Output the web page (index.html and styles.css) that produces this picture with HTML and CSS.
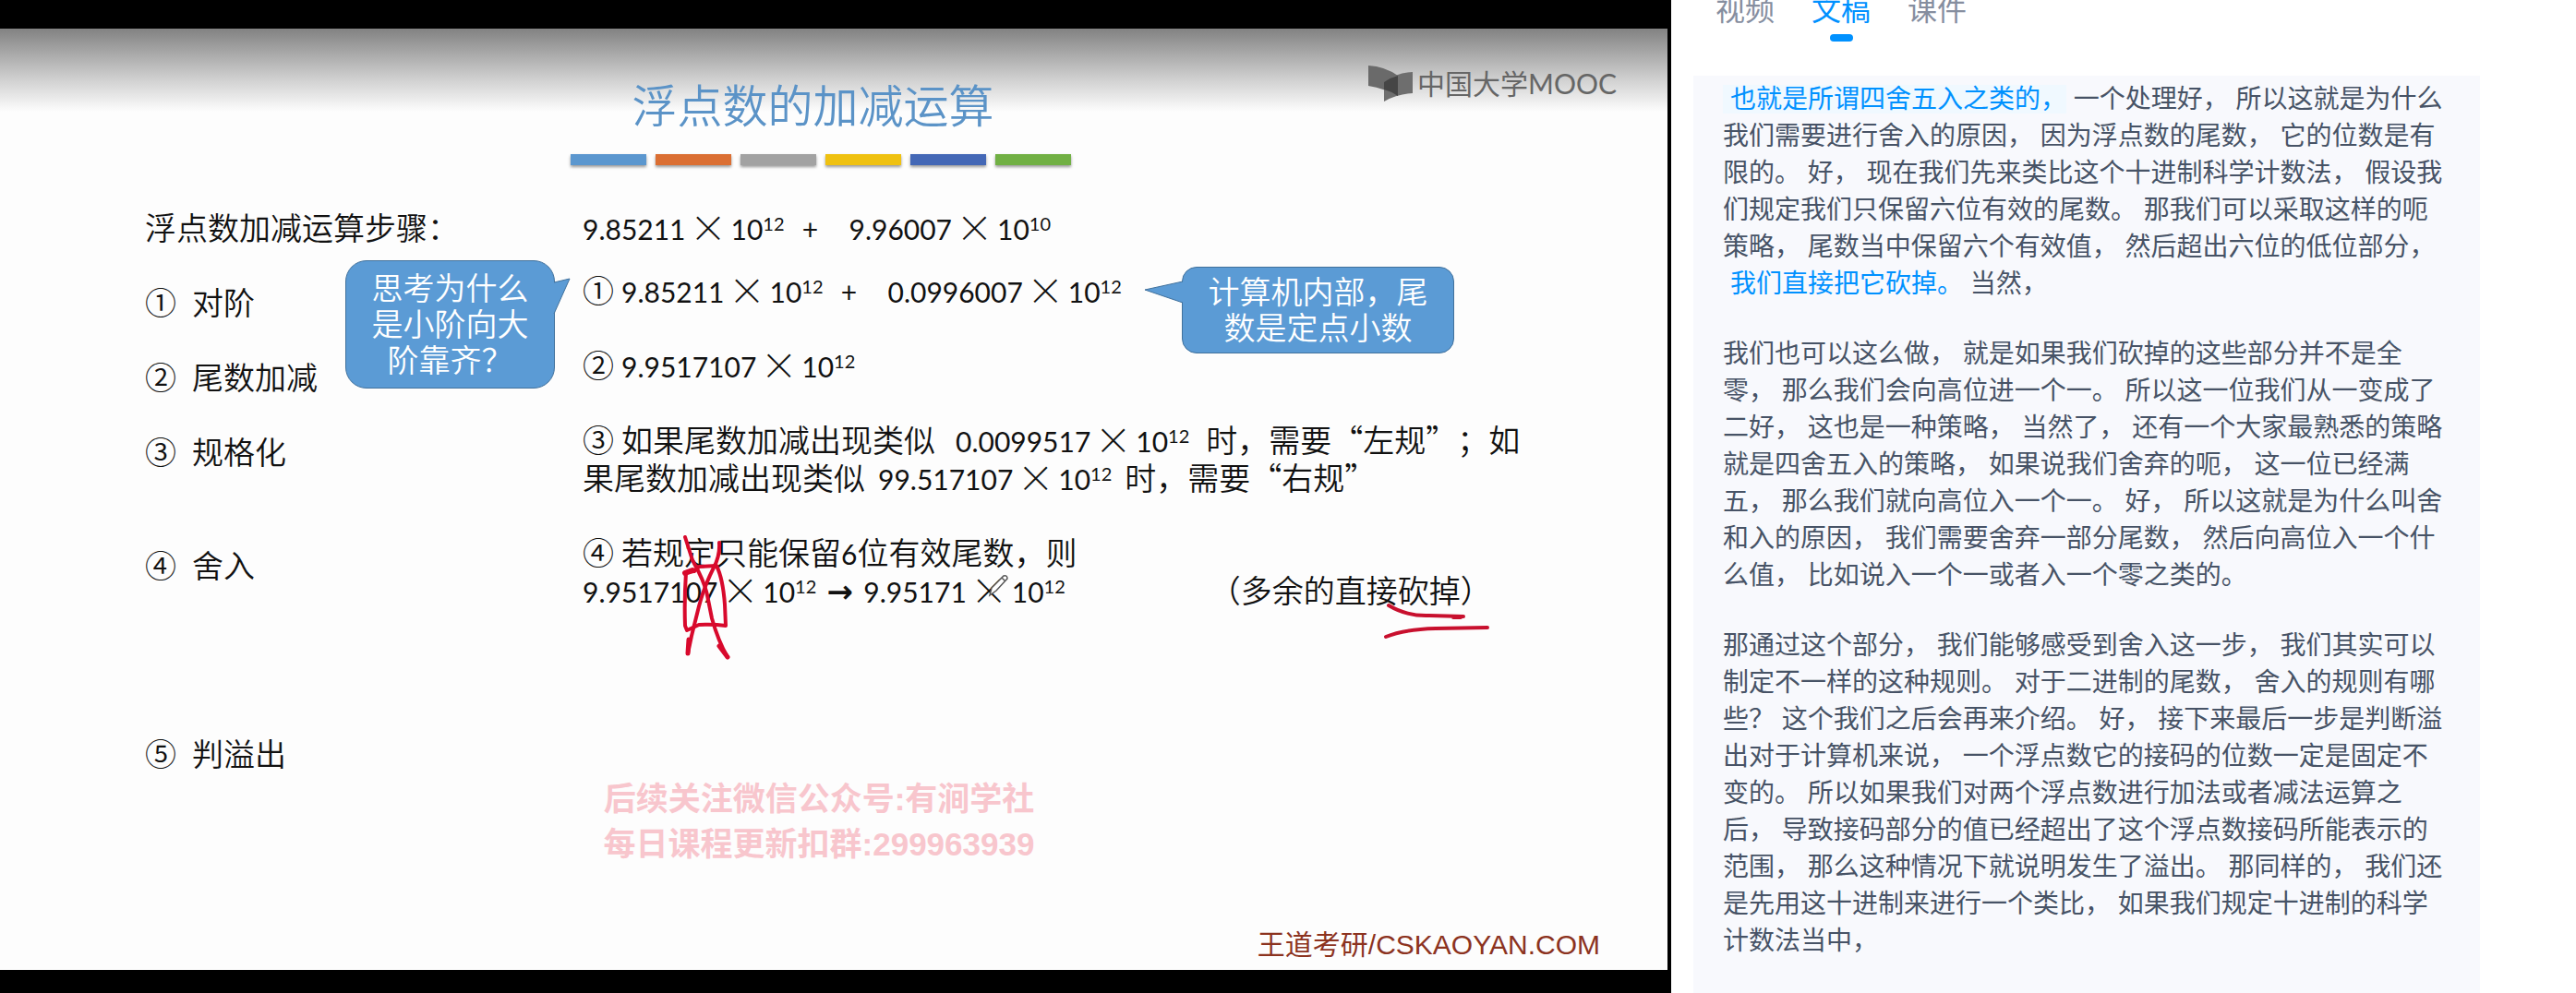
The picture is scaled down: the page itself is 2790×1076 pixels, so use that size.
FILE: index.html
```html
<!DOCTYPE html>
<html lang="zh-CN">
<head>
<meta charset="utf-8">
<meta name="viewport" content="width=device-width, initial-scale=1">
<title>浮点数的加减运算</title>
<link rel="stylesheet" href="styles.css">
</head>
<body>
<div class="page">
  <main class="video">
    <section class="slide">
      <header class="slide-head">
        <h1 class="slide-title">浮点数的加减运算</h1>
        <div class="bars">
          <span class="bar bar-blue"></span>
          <span class="bar bar-orange"></span>
          <span class="bar bar-gray"></span>
          <span class="bar bar-yellow"></span>
          <span class="bar bar-indigo"></span>
          <span class="bar bar-green"></span>
        </div>
      </header>

      <div class="columns">
        <div class="steps">
          <p class="steps-title">浮点数加减运算步骤：</p>
          <p class="step step-align"><span>①</span><span>对阶</span></p>
          <p class="step step-add"><span>②</span><span>尾数加减</span></p>
          <p class="step step-normal"><span>③</span><span>规格化</span></p>
          <p class="step step-round"><span>④</span><span>舍入</span></p>
          <p class="step step-overflow"><span>⑤</span><span>判溢出</span></p>
        </div>

        <div class="work">
          <p><span class="num">9.85211</span><span class="times">×</span><span class="num">10<sup>12</sup></span><span class="plus">+</span><span class="num">9.96007</span><span class="times">×</span><span class="num">10<sup>10</sup></span></p>
          <p class="work-align"><span class="mark">①</span><span class="num">9.85211</span><span class="times">×</span><span class="num">10<sup>12</sup></span><span class="plus">+</span><span class="num">0.0996007</span><span class="times">×</span><span class="num">10<sup>12</sup></span></p>
          <p class="work-item"><span class="mark">②</span><span class="num">9.9517107</span><span class="times">×</span><span class="num">10<sup>12</sup></span></p>
          <p class="work-item"><span class="mark">③</span>如果尾数加减出现类似<span class="num num-lead">0.0099517</span><span class="times">×</span><span class="num num-trail">10<sup>12</sup></span>时，需要“左规”；如<br>果尾数加减出现类似<span class="num num-mid">99.517107</span><span class="times">×</span><span class="num num-end">10<sup>12</sup></span>时，需要“右规”</p>
          <p class="work-item"><span class="mark">④</span>若规定只能保留<span class="num">6</span>位有效尾数，则<br><span class="num">9.9517107</span><span class="times">×</span><span class="num">10<sup>12</sup></span><span class="arrow">→</span><span class="num">9.95171</span><span class="times">×</span><span class="num">10<sup>12</sup></span><span class="note">（多余的直接砍掉）</span></p>
        </div>
      </div>

      <p class="watermark">后续关注微信公众号:有涧学社<br>每日课程更新扣群:299963939</p>
      <footer class="slide-foot">王道考研/CSKAOYAN.COM</footer>

      <div class="logo">
        <svg class="logo-mark" viewBox="0 0 48 40" aria-hidden="true">
          <path d="M0 0Q18 1 32 11V33Q18 25 0 22Z" fill="#6a6a6a"/>
          <path d="M17 18Q30 8 48 7V30Q31 31 17 39Z" fill="#6e6e6e"/>
          <path d="M17 18Q24 13 32 11V33Q25 28 17 26Z" fill="#454545"/>
        </svg>
        <span>中国大学MOOC</span>
      </div>

      <div class="callout callout-think">
        <svg class="tail" viewBox="0 0 20 40" aria-hidden="true"><path d="M1 5L18 1L1 39" fill="#5b9bd5" stroke="#41719c"/></svg>
        思考为什么<br>是小阶向大<br>阶靠齐？
      </div>
      <div class="callout callout-fixed">
        <svg class="tail" viewBox="0 0 44 26" aria-hidden="true"><path d="M43 1L2 10L43 24" fill="#5b9bd5" stroke="#41719c"/></svg>
        计算机内部，尾<br>数是定点小数
      </div>

      <svg class="ink ink-cross" viewBox="736 578 60 140" aria-hidden="true">
        <g fill="none" stroke="#d8092c" stroke-width="4" stroke-linecap="round" stroke-linejoin="round">
          <path d="M743 620Q741 650 742 678L744 683L757 677Q772 676 786 678L785 655Q783 627 776 613L757 614L752 619L742 620"/>
          <path d="M742 582L750 607Q763 630 766 645L771 670Q778 695 788 712"/>
          <path d="M779 588Q780 602 773 615Q762 637 757 657L749 689L745 708"/>
          <path d="M746 693L745 708M779 700L788 712" stroke-width="5"/>
          <path d="M742 621L750 618" stroke-width="6"/>
        </g>
      </svg>
      <svg class="ink ink-lines" viewBox="1496 650 120 46" aria-hidden="true">
        <g fill="none" stroke="#c8102e" stroke-width="4" stroke-linecap="round">
          <path d="M1504 656Q1524 668 1548 667L1585 668M1574 669H1582"/>
          <path d="M1501 690Q1520 682 1555 681L1611 680"/>
        </g>
      </svg>
      <svg class="ink ink-pen" viewBox="0 0 24 26" aria-hidden="true">
        <path d="M2 23L4 15L17 2Q21 1 21 5L9 18ZM15 4L19 8" fill="#fff" stroke="#555" stroke-width="1.5"/>
      </svg>
    </section>
  </main>

  <aside class="side">
    <nav class="tabs" role="tablist">
      <button class="tab" type="button" role="tab">视频</button>
      <button class="tab tab-active" type="button" role="tab" aria-selected="true">文稿</button>
      <button class="tab" type="button" role="tab">课件</button>
    </nav>
    <article class="transcript">
      <p><span class="said said-now">也就是所谓四舍五入之类的，</span> 一个处理好， 所以这就是为什么我们需要进行舍入的原因， 因为浮点数的尾数， 它的位数是有限的。 好， 现在我们先来类比这个十进制科学计数法， 假设我们规定我们只保留六位有效的尾数。 那我们可以采取这样的呃策略， 尾数当中保留六个有效值， 然后超出六位的低位部分， <span class="said">我们直接把它砍掉。</span> 当然，</p>
      <p>我们也可以这么做， 就是如果我们砍掉的这些部分并不是全零， 那么我们会向高位进一个一。 所以这一位我们从一变成了二好， 这也是一种策略， 当然了， 还有一个大家最熟悉的策略就是四舍五入的策略， 如果说我们舍弃的呃， 这一位已经满五， 那么我们就向高位入一个一。 好， 所以这就是为什么叫舍和入的原因， 我们需要舍弃一部分尾数， 然后向高位入一个什么值， 比如说入一个一或者入一个零之类的。</p>
      <p>那通过这个部分， 我们能够感受到舍入这一步， 我们其实可以制定不一样的这种规则。 对于二进制的尾数， 舍入的规则有哪些？ 这个我们之后会再来介绍。 好， 接下来最后一步是判断溢出对于计算机来说， 一个浮点数它的接码的位数一定是固定不变的。 所以如果我们对两个浮点数进行加法或者减法运算之后， 导致接码部分的值已经超出了这个浮点数接码所能表示的范围， 那么这种情况下就说明发生了溢出。 那同样的， 我们还是先用这十进制来进行一个类比， 如果我们规定十进制的科学计数法当中，</p>
    </article>
  </aside>
</div>
</body>
</html>
```
FILE: styles.css
```css
* {
  box-sizing: border-box;
}

body {
  margin: 0;
  background: #fff;
  font-family: "Liberation Sans", "Noto Sans CJK SC", sans-serif;
  text-spacing-trim: space-all;
}

h1,
p {
  margin: 0;
}

.page {
  display: grid;
  grid-template-columns: 1810fr 980fr;
  min-height: 100vh;
}

/* Video area */
.video {
  display: flex;
  padding: 31px 4px 25px 0;
  background: #000;
}

.slide {
  position: relative;
  flex: 1;
  display: flex;
  flex-direction: column;
  padding: 51px 73px 7px 157px;
  background: linear-gradient(#828282, #a6a6a6 25px, #d0d0d0 55px, #fdfdfd 90px);
  color: #111;
  font-family: "Noto Sans CJK SC", sans-serif;
  font-size: 34px;
  font-weight: 350;
  line-height: 41px;
}

.slide-head {
  display: flex;
  flex-direction: column;
  align-items: center;
  gap: 25px;
  padding-right: 113px;
}

.slide-title {
  padding-right: 16px;
  color: #5b93c7;
  font-size: 49px;
  font-weight: 350;
  line-height: 60px;
}

.bars {
  display: flex;
  gap: 10px;
}

.bar {
  width: 82px;
  height: 12px;
  box-shadow: 0 2px 3px #0006;
}

.bar-blue { background: #5b97cf; }
.bar-orange { background: #db6f33; }
.bar-gray { background: #a2a2a2; }
.bar-yellow { background: #efc111; }
.bar-indigo { background: #4468b6; }
.bar-green { background: #71b044; }

.columns {
  display: grid;
  grid-template-columns: 474px 1fr;
  margin-top: 46px;
  white-space: nowrap;
}

.step {
  display: flex;
  gap: 17px;
}

.step-align,
.step-add,
.step-normal { margin-top: 40px; }
.step-round { margin-top: 82px; }
.step-overflow { margin-top: 163px; }

.work-align { margin-top: 27px; }
.work-item { margin-top: 40px; }

.mark {
  margin-right: 8px;
}

.num {
  font-family: Lato, sans-serif;
  font-size: 30px;
  font-weight: 400;
  line-height: 1;
}

.num sup {
  font-size: 20px;
  line-height: 0;
  vertical-align: 10px;
}

.num-lead { margin-left: 22px; }
.num-trail { margin-right: 18px; }
.num-mid { margin-left: 14px; }
.num-end { margin-right: 14px; }

.times,
.plus,
.arrow {
  display: inline-block;
  text-align: center;
  line-height: 30px;
}

.times {
  width: 49px;
  font-size: 40px;
  font-weight: 300;
  vertical-align: -2px;
}

.plus {
  width: 70px;
  padding-right: 14px;
  font-family: Lato, sans-serif;
  font-size: 30px;
  font-weight: 400;
}

.arrow {
  width: 51px;
  font-family: "DejaVu Sans", sans-serif;
  font-weight: 700;
}

.note {
  margin-left: 156px;
}

.watermark {
  margin-top: 5px;
  padding-right: 116px;
  color: #f8c6cd;
  font-family: "Liberation Sans", "Noto Sans CJK SC", sans-serif;
  font-size: 35px;
  font-weight: 700;
  line-height: 49px;
  text-align: center;
}

.slide-foot {
  margin-top: auto;
  color: #8c331f;
  font-family: "Liberation Sans", "Noto Sans CJK SC", sans-serif;
  font-size: 30px;
  font-weight: 400;
  line-height: 40px;
  text-align: right;
}

/* Items laid over the slide */
.logo {
  position: absolute;
  top: 39px;
  right: 55px;
  display: flex;
  align-items: center;
  gap: 5px;
  color: #666;
  font-family: Lato, "Noto Sans CJK SC", sans-serif;
  font-size: 30px;
  font-weight: 400;
}

.logo-mark {
  width: 48px;
  height: 40px;
}

.callout {
  position: absolute;
  display: flow-root;
  border: 1px solid #41719c;
  background: #5b9bd5;
  color: #fff;
  line-height: 39px;
  text-align: center;
}

.callout-think {
  top: 251px;
  left: 374px;
  width: 227px;
  padding: 8px 0 12px;
  border-radius: 23px;
}

.callout-fixed {
  top: 258px;
  left: 1280px;
  width: 295px;
  padding: 5px 0 9px;
  border-radius: 16px;
}

.tail {
  position: absolute;
}

.callout-think .tail {
  top: 18px;
  left: 224px;
  width: 20px;
  height: 40px;
}

.callout-fixed .tail {
  top: 14px;
  left: -43px;
  width: 44px;
  height: 26px;
}

.ink {
  position: absolute;
}

.ink-cross {
  top: 547px;
  left: 736px;
  width: 60px;
  height: 140px;
}

.ink-lines {
  top: 619px;
  left: 1496px;
  width: 120px;
  height: 46px;
}

.ink-pen {
  top: 591px;
  left: 1070px;
  width: 24px;
  height: 26px;
}

/* Transcript panel */
.side {
  display: flex;
  flex-direction: column;
  padding: 0 104px 0 24px;
}

.tabs {
  display: flex;
  gap: 40px;
  height: 82px;
  padding-left: 24px;
}

.tab {
  display: flex;
  flex-direction: column;
  align-items: center;
  gap: 7px;
  margin-top: -8px;
  padding: 0;
  border: 0;
  background: none;
  color: #868e9f;
  font-family: inherit;
  font-size: 32px;
  line-height: 38px;
}

.tab-active {
  color: #0091ff;
}

.tab-active::after {
  content: "";
  width: 25px;
  height: 8px;
  border-radius: 4px;
  background: #0091ff;
}

.transcript {
  flex: 1;
  display: flex;
  flex-direction: column;
  gap: 36px;
  padding: 6px 32px 36px;
  background: #f8f9fd;
  color: #475366;
  font-size: 28px;
  line-height: 40px;
}

.said {
  padding-left: 8px;
  color: #0091ff;
}

.said-now {
  background: #f0f9ff;
}
```
